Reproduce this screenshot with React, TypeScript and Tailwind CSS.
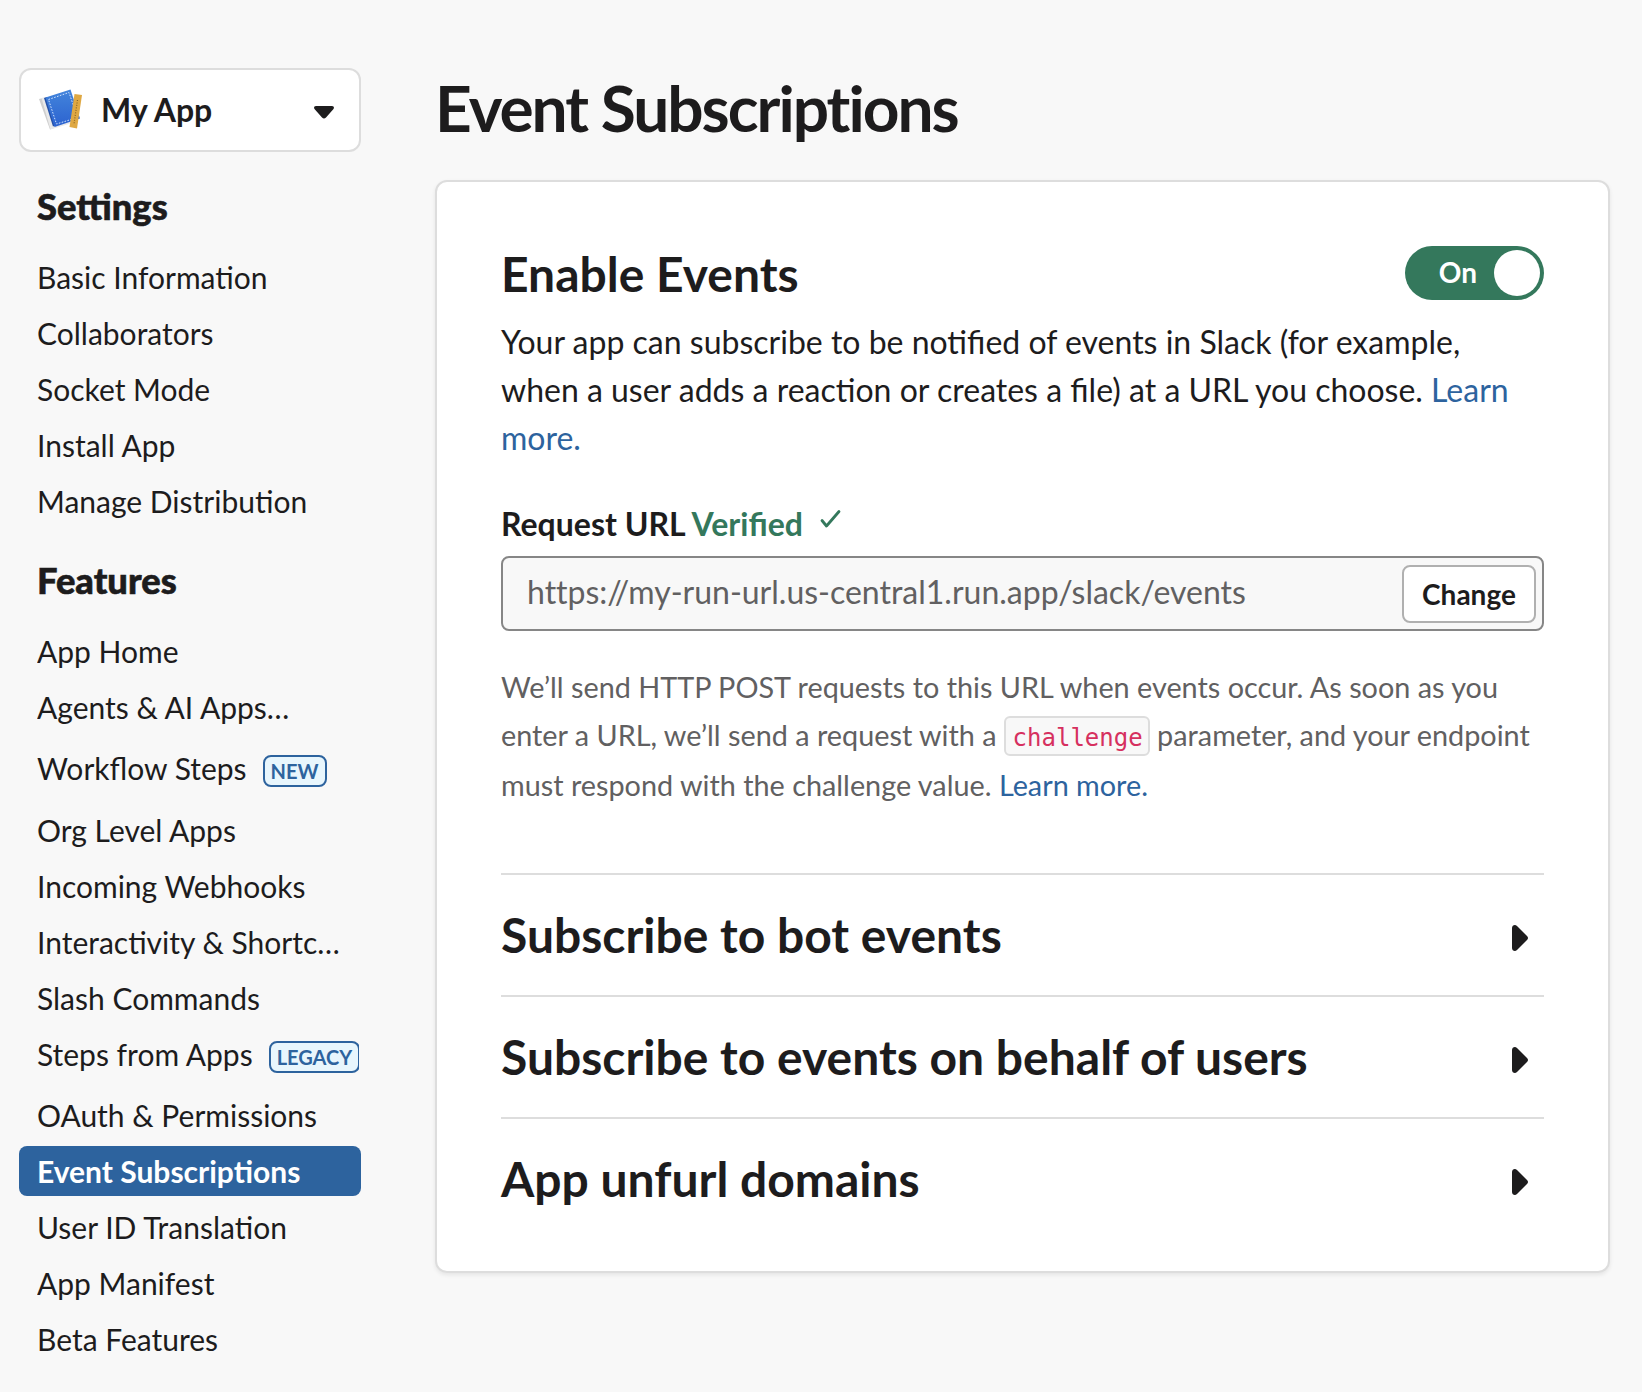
import { ReactNode } from 'react';

function Badge({ children }: { children: ReactNode }) {
  return (
    <span className="mt-[5px] flex h-8 shrink-0 items-center rounded-lg border-2 border-[#2d639e] bg-[#e8f6fd] px-[6px] text-[20px] font-bold leading-none text-[#2d639e]">
      {children}
    </span>
  );
}

type Item = { label: string; badge?: string; active?: boolean; box: string };

const plain = 'h-[50px] mb-[6px]';
const settings: Item[] = ['Basic Information', 'Collaborators', 'Socket Mode', 'Install App', 'Manage Distribution'].map(
  (label) => ({ label, box: plain }),
);
const features: Item[] = [
  { label: 'App Home', box: plain },
  { label: 'Agents & AI Apps…', box: plain },
  { label: 'Workflow Steps', badge: 'NEW', box: 'h-[60px] mb-[7px]' },
  { label: 'Org Level Apps', box: plain },
  { label: 'Incoming Webhooks', box: plain },
  { label: 'Interactivity & Shortc…', box: plain },
  { label: 'Slash Commands', box: plain },
  { label: 'Steps from Apps', badge: 'LEGACY', box: 'h-[50px] mb-[11px]' },
  { label: 'OAuth & Permissions', box: plain },
  { label: 'Event Subscriptions', active: true, box: plain },
  { label: 'User ID Translation', box: plain },
  { label: 'App Manifest', box: plain },
  { label: 'Beta Features', box: plain },
];

function NavList({ items }: { items: Item[] }) {
  return (
    <ul className="flex flex-col">
      {items.map((it) => (
        <li
          key={it.label}
          className={`${it.box} flex whitespace-nowrap rounded-lg pl-[18px] pr-[2px] text-[30px] ${
            it.active ? 'bg-[#2d639e] font-bold text-white' : ''
          }`}
        >
          <div className="flex min-w-0 flex-1 items-center gap-4 overflow-hidden">
            <span>{it.label}</span>
            {it.badge && <Badge>{it.badge}</Badge>}
          </div>
        </li>
      ))}
    </ul>
  );
}

function AppIcon() {
  return (
    <svg width="44" height="44" viewBox="0 0 44 44" className="shrink-0">
      <defs>
        <linearGradient id="cover" x1="0" y1="0" x2="0" y2="1">
          <stop offset="0" stopColor="#4385dc" />
          <stop offset="1" stopColor="#2c62cf" />
        </linearGradient>
      </defs>
      <path d="M0 11l4-1 11 30-4 1.500z" fill="#cfcfcf" />
      <path d="M2.500 10l4-1 9 29 16-4.500v2L11.500 41.500z" fill="#e9e9e9" />
      <path d="M5 10l3-1 8 28.500-2 1z" fill="#2451a8" />
      <path d="M6.500 9.500L31.500 1.500l9.500 29L15.500 39z" fill="url(#cover)" />
      <path d="M9.500 11.500L30 4.500l8.500 25L17.500 36z" fill="none" stroke="#cfe3ff" strokeWidth="1" strokeDasharray="1.600 1.400" />
      <path d="M35.500 6l7.500 1L38 40.500l-7.500-1.500z" fill="#dfa843" />
      <path d="M38.500 12l-3.500 24" stroke="#8a6526" strokeWidth="1.200" strokeDasharray="1 1.500" />
    </svg>
  );
}

function Row({ title }: { title: string }) {
  return (
    <section className="flex h-[122px] items-center justify-between border-t-2 border-[#ddd] pr-4">
      <h2 className="text-[48px] font-bold leading-[60px]">{title}</h2>
      <svg width="16" height="26" viewBox="0 0 16 26" className="mt-[6px]">
        <path d="M0 3C0 0.300 3-1 5 1L15 11Q17 13 15 15L5 25C3 27 0 25.700 0 23Z" fill="#1d1c1d" />
      </svg>
    </section>
  );
}

const groupTitle = 'mb-[25px] h-[44px] pl-[18px] text-[36.300px] font-black leading-[46px] [-webkit-text-stroke:0.6px_#1d1c1d]';

export default function App() {
  return (
    <div className="flex h-[1392px] w-[1642px] overflow-hidden bg-[#f8f8f8] pl-[19px] font-['Lato',sans-serif] text-[#1d1c1d]">
      <aside className="w-[342px] shrink-0 pt-[68px]">
        <button className="flex h-[84px] w-full items-center rounded-xl border-2 border-[#ddd] bg-white pl-[18px] pr-[25px] text-left">
          <AppIcon />
          <span className="ml-[18px] flex-1 text-[32px] font-bold">My App</span>
          <svg width="20" height="13" viewBox="0 0 20 13" className="mt-[5px]">
            <path d="M2 0H18C20 0 20.500 2 19.300 3.200L12 11.500Q10 13.500 8 11.500L0.700 3.200C-0.500 2 0 0 2 0Z" fill="#1d1c1d" />
          </svg>
        </button>
        <h3 className={`mt-[31px] ${groupTitle}`}>Settings</h3>
        <NavList items={settings} />
        <h3 className={`mt-[25px] ${groupTitle}`}>Features</h3>
        <NavList items={features} />
      </aside>
      <main className="ml-[74px] w-[1175px] pt-[68px]">
        <h1 className="h-[112px] text-[64px] font-bold leading-[80px] tracking-[-2px]">Event Subscriptions</h1>
        <div className="h-[1093px] rounded-xl border-2 border-[#ddd] bg-white px-16 pt-16 shadow-[0_2px_4px_rgba(0,0,0,0.08)]">
          <div className="flex h-[58px] justify-between">
            <h2 className="text-[48px] font-bold leading-[56px]">Enable Events</h2>
            <div className="flex h-[54px] w-[139px] items-center justify-end rounded-full bg-[#34785c] pr-1 text-[28px] font-bold text-white">
              <span className="mb-[2px]">On</span>
              <span className="ml-[17px] size-[46px] rounded-full bg-white" />
            </div>
          </div>
          <p className="mt-[14px] h-[144px] text-[32px] leading-[48px]">
            Your app can subscribe to be notified of events in Slack (for example,
            <br />
            when a user adds a reaction or creates a file) at a URL you choose. <a className="text-[#2d639e]">Learn
            <br />
            more.</a>
          </p>
          <div className="mt-[38px] flex h-[56px] text-[32px] font-bold leading-[48px]">
            <span>Request URL</span>
            <span className="ml-[6px] text-[#34785c]">Verified</span>
            <svg width="22" height="20" viewBox="0 0 22 20" className="ml-[17px] mt-[9px]" fill="none" stroke="#34785c" strokeWidth="2.800" strokeLinecap="round" strokeLinejoin="round">
              <path d="M2 11.500L6.500 17L19 2.500" />
            </svg>
          </div>
          <div className="flex h-[75px] items-center justify-between rounded-lg border-2 border-[#868686] bg-[#f8f8f8] pl-[24px] pr-[6px] text-[32px] text-[#616061]">
            <span className="-mt-[4px] [font-variant-ligatures:none]">https://my-run-url.us-central1.run.app/slack/events</span>
            <button className="h-[58px] w-[134px] rounded-lg border-2 border-[#b0b0b0] bg-white text-[28px] font-bold text-[#1d1c1d]">Change</button>
          </div>
          <div className="mt-[32px] whitespace-nowrap text-[28.8px] leading-[48px] text-[#616061]">
            <p>We’ll send HTTP POST requests to this URL when events occur. As soon as you</p>
            <p className="flex h-[50px]">
              <span>enter a URL, we’ll send a request with a</span>
              <code className="ml-[7px] mr-[7.500px] mt-[5px] flex h-10 w-[146px] items-center rounded-md border-2 border-[#ddd] bg-[#f8f8f8] pl-[7px] pt-[4px] font-['DejaVu_Sans_Mono',monospace] text-[24px] leading-none text-[#d6305f]">challenge</code>
              <span>parameter, and your endpoint</span>
            </p>
            <p>must respond with the challenge value. <a className="text-[#2d639e]">Learn more.</a></p>
          </div>
          <div className="mt-[64px]">
            <Row title="Subscribe to bot events" />
            <Row title="Subscribe to events on behalf of users" />
            <Row title="App unfurl domains" />
          </div>
        </div>
      </main>
    </div>
  );
}
